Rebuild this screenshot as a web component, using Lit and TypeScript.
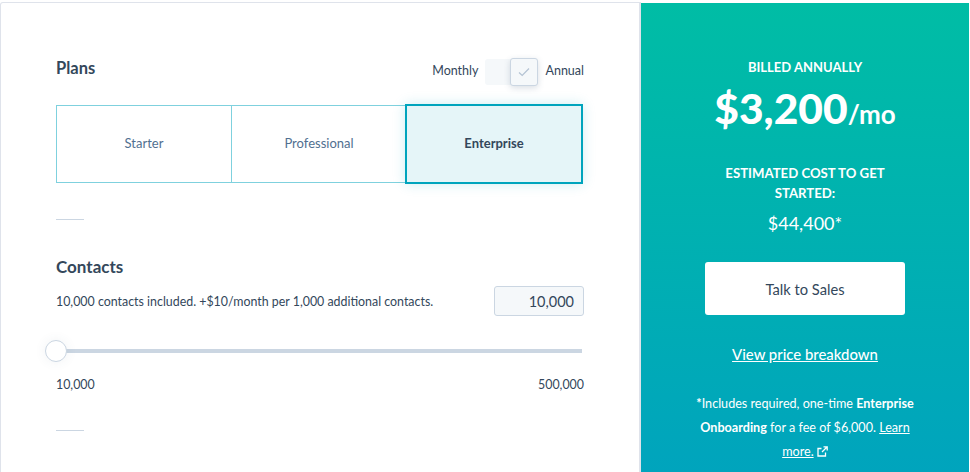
import { LitElement, css, html } from 'lit'

export class AppRoot extends LitElement {
  static styles = css`
    :host {
      display: block;
      width: 970px;
      height: 472px;
      overflow: hidden;
      background: #fff;
      font-family: Lato, 'Noto Sans', sans-serif;
      color: #33475b;
    }
    .page {
      display: flex;
      height: 472px;
      padding-top: 2px;
      box-sizing: border-box;
    }
    .left {
      width: 641px;
      box-sizing: border-box;
      border: 1px solid #dfe3eb;
      border-width: 1px 2px 0 1px;
      border-top-left-radius: 3px;
      padding: 0 55px 0 55px;
    }
    .right {
      width: 328px;
      height: 470px;
      margin-top: 1px;
      box-sizing: border-box;
      padding: 54px 48px 0;
      background: linear-gradient(180deg, #00bda5 0%, #00a4bd 100%);
      color: #fff;
      text-align: center;
    }
    .plans-head {
      display: flex;
      justify-content: space-between;
      align-items: center;
      height: 40px;
      margin-top: 44px;
    }
    h2 {
      margin: 0;
      font-size: 17px;
      font-weight: 700;
      line-height: 24px;
    }
    .plans-head h2 {
      font-size: 16.5px;
      padding-top: 2px;
    }
    .toggle-wrap {
      display: flex;
      align-items: center;
      font-size: 12.5px;
      margin-top: 10px;
    }
    .toggle-wrap span {
      padding-bottom: 3px;
    }
    .track {
      position: relative;
      width: 53px;
      height: 26px;
      margin: 0 7px 0 7px;
      background: #f5f8fa;
      border-radius: 3px;
    }
    .knob {
      position: absolute;
      right: 0;
      top: -1px;
      width: 28px;
      height: 28px;
      box-sizing: border-box;
      display: flex;
      align-items: center;
      justify-content: center;
      background: #f5f8fa;
      border: 1px solid #cbd6e2;
      border-radius: 3px;
      box-shadow: 0 2px 6px rgba(66, 91, 118, 0.2);
    }
    .tiers {
      display: flex;
      margin-top: 18px;
      height: 78px;
    }
    .tier {
      flex: 0 0 176px;
      box-sizing: border-box;
      display: flex;
      align-items: center;
      justify-content: center;
      padding-bottom: 3px;
      border: 1px solid #7fd1de;
      font-size: 13px;
      color: #516f90;
      margin-right: -1px;
    }
    .tier.on {
      flex: 0 0 178px;
      height: 80px;
      margin: -1px 0 0 -1px;
      border: 2px solid #00a4bd;
      background: #e5f5f8;
      color: #33475b;
      font-weight: 700;
      box-shadow: 0 0 12px rgba(0, 164, 189, 0.2);
      position: relative;
    }
    .rule {
      width: 28px;
      height: 1px;
      background: #cbd6e2;
    }
    .rule.first {
      margin-top: 36px;
    }
    .contacts {
      margin-top: 35px;
    }
    .desc-row {
      display: flex;
      justify-content: space-between;
      align-items: center;
      margin-top: 7px;
      font-size: 12.4px;
    }
    .count {
      width: 90px;
      height: 30px;
      box-sizing: border-box;
      padding-right: 9px;
      display: flex;
      align-items: center;
      justify-content: flex-end;
      background: #f5f8fa;
      border: 1px solid #cbd6e2;
      border-radius: 3px;
      font-size: 14.5px;
    }
    .slider {
      position: relative;
      height: 4px;
      margin-top: 33px;
      width: 526px;
      background: #cbd6e2;
    }
    .handle {
      position: absolute;
      left: -11px;
      top: -9px;
      width: 22px;
      height: 22px;
      box-sizing: border-box;
      border: 1px solid #cbd6e2;
      border-radius: 50%;
      background: #fff;
      box-shadow: 0 0 12px rgba(66, 91, 118, 0.08);
    }
    .range {
      display: flex;
      justify-content: space-between;
      margin-top: 24px;
      font-size: 12.4px;
      line-height: 16px;
    }
    .rule.last {
      margin-top: 37px;
    }
    .billed {
      font-size: 13px;
      font-weight: 700;
      line-height: 20px;
    }
    .est {
      margin: 25px 20px 0;
      font-size: 13.2px;
      font-weight: 700;
      line-height: 20px;
    }
    .price {
      margin-top: 7px;
      font-size: 42.5px;
      font-weight: 900;
      line-height: 48px;
      white-space: nowrap;
    }
    .price span {
      font-size: 26px;
      font-weight: 700;
    }
    .fee {
      margin-top: 8px;
      font-size: 18px;
      line-height: 24px;
    }
    .cta {
      margin: 27px auto 0;
      width: 200px;
      height: 53px;
      display: flex;
      align-items: center;
      justify-content: center;
      background: #fff;
      border-radius: 3px;
      color: #33475b;
      font-size: 14.7px;
    }
    a {
      color: inherit;
      text-decoration: underline;
    }
    .breakdown {
      display: block;
      margin-top: 29px;
      font-size: 14.9px;
      font-weight: 500;
      line-height: 20px;
    }
    .note {
      width: 226px;
      margin: 28px auto 0;
      font-size: 12.6px;
      line-height: 24px;
    }
    .note svg {
      vertical-align: -1px;
      margin-left: 0;
    }
  `

  render() {
    return html`
      <div class="page">
        <section class="left">
          <div class="plans-head">
            <h2>Plans</h2>
            <div class="toggle-wrap">
              <span>Monthly</span>
              <div class="track">
                <div class="knob">
                  <svg width="12" height="10" viewBox="0 0 12 10" fill="none" stroke="#b4c3d3" stroke-width="1.2">
                    <path d="M1 5.5 L4.2 8.5 L11 1.5" />
                  </svg>
                </div>
              </div>
              <span>Annual</span>
            </div>
          </div>
          <div class="tiers">
            <div class="tier">Starter</div>
            <div class="tier">Professional</div>
            <div class="tier on">Enterprise</div>
          </div>
          <div class="rule first"></div>
          <h2 class="contacts">Contacts</h2>
          <div class="desc-row">
            <span>10,000 contacts included. +$10/month per 1,000 additional contacts.</span>
            <div class="count">10,000</div>
          </div>
          <div class="slider"><div class="handle"></div></div>
          <div class="range"><span>10,000</span><span>500,000</span></div>
          <div class="rule last"></div>
        </section>
        <aside class="right">
          <div class="billed">BILLED ANNUALLY</div>
          <div class="price">$3,200<span>/mo</span></div>
          <div class="est">ESTIMATED COST TO GET STARTED:</div>
          <div class="fee">$44,400*</div>
          <div class="cta">Talk to Sales</div>
          <a class="breakdown" href="#">View price breakdown</a>
          <div class="note">
            <b>*</b>Includes required, one-time <b>Enterprise Onboarding</b> for a fee of $6,000.
            <a href="#">Learn more.</a>
            <svg width="11" height="11" viewBox="0 0 11 11" fill="none" stroke="#fff" stroke-width="1.3">
              <path d="M8.5 6.5 V10 H1 V2.5 H4.5" />
              <path d="M5 6 L10 1 M6.5 0.8 H10.2 V4.5" />
            </svg>
          </div>
        </aside>
      </div>
    `
  }
}

customElements.define('app-root', AppRoot)
